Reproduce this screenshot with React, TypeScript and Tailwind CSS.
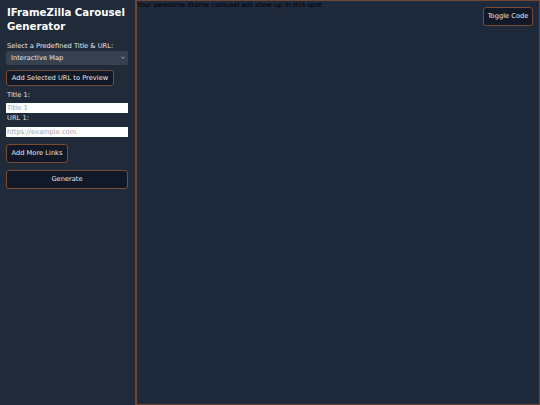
import { useState } from "react";

const presets = [
  { title: "Interactive Map", url: "https://www.openstreetmap.org/export/embed.html" },
  { title: "Video Player", url: "https://www.youtube.com/embed/" },
  { title: "Code Sandbox", url: "https://codesandbox.io/embed/" },
];

export default function App() {
  const [links, setLinks] = useState([{ title: "", url: "" }]);
  const [preset, setPreset] = useState(0);
  const [showCode, setShowCode] = useState(false);

  return (
    <div
      className="flex h-[405px] w-[540px] overflow-hidden bg-[#1e293b] text-[6.7px] text-[#e5e7eb]"
      style={{ fontFamily: '"DejaVu Sans", Verdana, sans-serif' }}
    >
      {/* sidebar */}
      <div className="flex w-[135px] shrink-0 flex-col bg-[#202a38] px-[6px] pt-[6px]">
        <h2 className="pl-[1px] text-[10.2px] font-bold leading-[14px] text-white">
          IFrameZilla Carousel Generator
        </h2>

        <label className="mt-[7px] pl-[1px] leading-[10px]">Select a Predefined Title &amp; URL:</label>
        <div className="relative w-[122px]">
          <select
            value={preset}
            onChange={(e) => setPreset(Number(e.target.value))}
            className="block h-[14px] w-full appearance-none rounded-[2px] bg-[#374151] pl-[5px] text-[6.7px] text-[#e5e7eb] outline-none"
          >
            {presets.map((p, i) => (
              <option key={p.title} value={i}>
                {p.title}
              </option>
            ))}
          </select>
          <svg
            viewBox="0 0 10 6"
            className="pointer-events-none absolute right-[3px] top-[5px] h-[3px] w-[4px]"
            fill="none"
            stroke="#e5e7eb"
            strokeWidth="1.6"
          >
            <path d="M1 1l4 4 4-4" />
          </svg>
        </div>

        <button
          onClick={() => setLinks([...links.slice(0, -1), { ...presets[preset] }])}
          className="mt-[5px] h-[16px] w-[108px] rounded-[3px] border border-[#7a4b30] bg-[#111827] text-[6.7px] text-[#e5e7eb]"
        >
          Add Selected URL to Preview
        </button>

        {links.map((l, i) => (
          <div key={i} className="flex flex-col">
            <label className="mt-[4px] pl-[1px] leading-[10px]">Title {i + 1}:</label>
            <input
              value={l.title}
              placeholder={`Title ${i + 1}`}
              onChange={(e) => {
                const n = [...links];
                n[i] = { ...n[i], title: e.target.value };
                setLinks(n);
              }}
              className="mt-[3px] block h-[10px] w-[122px] bg-white px-[1px] text-[6.7px] text-black placeholder:text-[#9ca3af] outline-none"
            />
            <label className="pl-[1px] leading-[10px]">URL {i + 1}:</label>
            <input
              value={l.url}
              placeholder="https://example.com"
              onChange={(e) => {
                const n = [...links];
                n[i] = { ...n[i], url: e.target.value };
                setLinks(n);
              }}
              className="mt-[4px] block h-[10px] w-[122px] bg-white px-[1px] text-[6.7px] text-black placeholder:text-[#9ca3af] outline-none"
            />
          </div>
        ))}

        <button
          onClick={() => setLinks([...links, { title: "", url: "" }])}
          className="mt-[7px] h-[19px] w-[62px] rounded-[3px] border border-[#7a4b30] bg-[#111827] text-[6.7px] text-[#e5e7eb]"
        >
          Add More Links
        </button>

        <button className="mt-[7px] h-[19px] w-[122px] rounded-[3px] border border-[#7a4b30] bg-[#111827] text-[6.7px] text-[#e5e7eb]">
          Generate
        </button>
      </div>

      {/* preview */}
      <div className="relative flex-1 border border-l-2 border-[#6e4632] bg-[#1e293b]">
        <p className="leading-[9px] text-black">Your awesome iframe carousel will show up in this spot</p>
        <button
          onClick={() => setShowCode(!showCode)}
          className="absolute right-[6px] top-[6px] h-[19px] w-[50px] rounded-[3px] border border-[#7a4b30] bg-[#111827] text-[6.7px] text-[#e5e7eb]"
        >
          Toggle Code
        </button>
      </div>
    </div>
  );
}
